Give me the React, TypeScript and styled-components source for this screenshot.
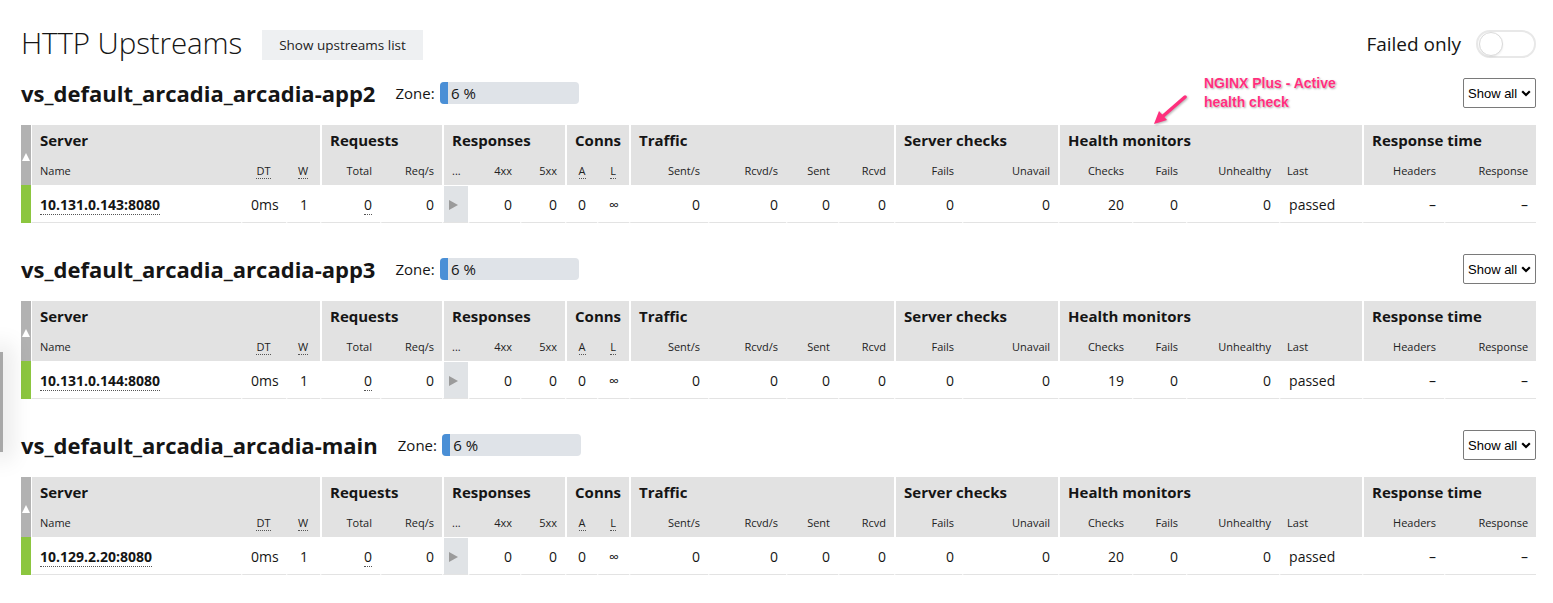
import React from 'react'
import styled, { createGlobalStyle, css } from 'styled-components'

const GlobalStyle = createGlobalStyle`
  body {
    margin: 0;
    background: #fff;
    font-family: 'Open Sans', sans-serif;
    color: #151515;
  }
`

type Align = 'left' | 'right' | 'center'

interface Column {
  label: string
  width: number
  align: Align
  dotted?: boolean
}

interface Group {
  title: string
  cols: Column[]
}

const GROUPS: Group[] = [
  {
    title: 'Server',
    cols: [
      { label: 'Name', width: 210, align: 'left' },
      { label: 'DT', width: 45, align: 'center', dotted: true },
      { label: 'W', width: 34, align: 'center', dotted: true },
    ],
  },
  {
    title: 'Requests',
    cols: [
      { label: 'Total', width: 60, align: 'right' },
      { label: 'Req/s', width: 62, align: 'right' },
    ],
  },
  {
    title: 'Responses',
    cols: [
      { label: '...', width: 26, align: 'left' },
      { label: '4xx', width: 52, align: 'right' },
      { label: '5xx', width: 45, align: 'right' },
    ],
  },
  {
    title: 'Conns',
    cols: [
      { label: 'A', width: 32, align: 'center', dotted: true },
      { label: 'L', width: 32, align: 'center', dotted: true },
    ],
  },
  {
    title: 'Traffic',
    cols: [
      { label: 'Sent/s', width: 79, align: 'right' },
      { label: 'Rcvd/s', width: 78, align: 'right' },
      { label: 'Sent', width: 52, align: 'right' },
      { label: 'Rcvd', width: 56, align: 'right' },
    ],
  },
  {
    title: 'Server checks',
    cols: [
      { label: 'Fails', width: 68, align: 'right' },
      { label: 'Unavail', width: 96, align: 'right' },
    ],
  },
  {
    title: 'Health monitors',
    cols: [
      { label: 'Checks', width: 74, align: 'right' },
      { label: 'Fails', width: 54, align: 'right' },
      { label: 'Unhealthy', width: 93, align: 'right' },
      { label: 'Last', width: 83, align: 'left' },
    ],
  },
  {
    title: 'Response time',
    cols: [
      { label: 'Headers', width: 82, align: 'right' },
      { label: 'Response', width: 92, align: 'right' },
    ],
  },
]

const UPSTREAMS = [
  { name: 'vs_default_arcadia_arcadia-app2', server: '10.131.0.143:8080', checks: 20, zone: 6 },
  { name: 'vs_default_arcadia_arcadia-app3', server: '10.131.0.144:8080', checks: 19, zone: 6 },
  { name: 'vs_default_arcadia_arcadia-main', server: '10.129.2.20:8080', checks: 20, zone: 6 },
]

const Page = styled.div`
  position: relative;
  padding: 30px 17px 20px 21px;
`

const TitleRow = styled.div`
  display: flex;
  align-items: center;
  height: 30px;
`

const Title = styled.h1`
  margin: 0;
  font-size: 29.5px;
  font-weight: 300;
  line-height: 30px;
  letter-spacing: -0.1px;
  position: relative;
  top: -2px;
`

const ListButton = styled.button`
  margin-left: 20px;
  height: 30px;
  padding: 0 17px;
  background: #eef0f2;
  border: none;
  font-family: 'Open Sans', sans-serif;
  font-size: 13.5px;
  color: #222;
`

const FailedFilter = styled.div`
  margin-left: auto;
  display: flex;
  align-items: center;
  gap: 15px;
  font-size: 19px;
  margin-top: -2px;
`

const ToggleTrack = styled.div`
  box-sizing: border-box;
  width: 60px;
  height: 28px;
  border: 2px solid #e8e8e8;
  border-radius: 14px;
  background: #fff;
  display: flex;
  align-items: center;
  padding: 0 1px;
`

const ToggleKnob = styled.div`
  width: 22px;
  height: 22px;
  border-radius: 50%;
  background: #fff;
  border: 1px solid #dadada;
  box-shadow: 0 1px 2px rgba(0, 0, 0, 0.08);
`

const Section = styled.section`
  margin-top: 18px;
  & + & {
    margin-top: 31px;
  }
`

const SectionHead = styled.div`
  display: flex;
  align-items: center;
  height: 30px;
  margin-bottom: 17px;
`

const UpstreamName = styled.h2`
  margin: 0;
  font-size: 22px;
  font-weight: 700;
  line-height: 30px;
`

const ZoneLabel = styled.span`
  margin-left: 20px;
  font-size: 15px;
`

const ZoneBar = styled.div`
  margin-left: 5px;
  width: 139px;
  height: 22px;
  border-radius: 4px;
  background: #dfe3e8;
  display: flex;
  align-items: center;
  overflow: hidden;
`

const ZoneFill = styled.div`
  align-self: stretch;
  background: #4a8fd6;
`

const ZoneText = styled.span`
  padding-left: 3px;
  font-size: 15px;
`

const SelectBox = styled.div`
  margin-left: auto;
  box-sizing: border-box;
  width: 73px;
  height: 30px;
  border: 1px solid #7a7a7a;
  border-radius: 2px;
  display: flex;
  align-items: center;
  justify-content: space-between;
  padding: 0 4px 0 4px;
  font-family: 'Liberation Sans', Arial, sans-serif;
  font-size: 13px;
  color: #000;
`

const Table = styled.table`
  border-collapse: separate;
  border-spacing: 0;
  table-layout: fixed;
  width: 1515px;
`

const HeadRow = styled.tr`
  height: 30px;
`

const BodyRow = styled.tr`
  height: 38px;
`

const cellAlign = css<{ $align: Align }>`
  text-align: ${({ $align }) => $align};
`

const SortCell = styled.th`
  background: #b2b2b2;
  padding: 0;
  vertical-align: middle;
  text-align: center;
`

const SortArrow = styled.span`
  display: inline-block;
  width: 0;
  height: 0;
  border-left: 4px solid transparent;
  border-right: 4px solid transparent;
  border-bottom: 8px solid #fff;
`

const GroupTh = styled.th<{ $gap: number }>`
  background: #e2e2e2;
  border-left: ${({ $gap }) => $gap}px solid #fff;
  padding: 0 8px;
  text-align: left;
  font-size: 15px;
  font-weight: 700;
  white-space: nowrap;
`

const SubTh = styled.th<{ $align: Align; $gap: number }>`
  ${cellAlign};
  background: #e2e2e2;
  border-left: ${({ $gap }) => $gap}px solid #fff;
  padding: 0 8px;
  font-size: 11px;
  font-weight: 400;
  white-space: nowrap;
  color: #222;
`

const Dotted = styled.span<{ $bold?: boolean }>`
  border-bottom: 1px dotted #555;
  font-weight: ${({ $bold }) => ($bold ? 700 : 'inherit')};
`

const StatusCell = styled.td`
  background: #8cc63f;
  padding: 0;
`

const Td = styled.td<{ $align: Align; $gap: number; $shaded?: boolean }>`
  ${cellAlign};
  border-left: ${({ $gap }) => $gap}px solid #fff;
  border-top: 1px solid #fff;
  border-bottom: 1px solid #e3e3e3;
  padding: 0 8px;
  font-size: 14px;
  white-space: nowrap;
  ${({ $shaded }) =>
    $shaded &&
    css`
      background: #e0e3e6;
      padding: 0 5px;
    `}
`

const PlayArrow = styled.span`
  display: inline-block;
  width: 0;
  height: 0;
  border-top: 5px solid transparent;
  border-bottom: 5px solid transparent;
  border-left: 9px solid #9b9b9b;
`

const Note = styled.div`
  position: absolute;
  left: 1204px;
  top: 74px;
  font-family: 'Liberation Sans', Arial, sans-serif;
  font-size: 14px;
  font-weight: 700;
  line-height: 19px;
  color: #ff2f7d;
  text-shadow: 0 0 1px #fff, 1px 1px 2px rgba(0, 0, 0, 0.35);
`

const NoteArrow = styled.svg`
  position: absolute;
  left: 1148px;
  top: 92px;
  filter: drop-shadow(1px 1px 1px rgba(0, 0, 0, 0.3));
`

const SidePanelEdge = styled.div`
  position: fixed;
  left: 0;
  top: 352px;
  width: 3px;
  height: 100px;
  background: #a8a8a8;
  box-shadow: 0 0 22px 8px rgba(0, 0, 0, 0.1);
`

function rowValues(server: string, checks: number): React.ReactNode[] {
  return [
    <Dotted $bold>{server}</Dotted>,
    '0ms',
    '1',
    <Dotted>0</Dotted>,
    '0',
    <PlayArrow />,
    '0',
    '0',
    '0',
    '∞',
    '0',
    '0',
    '0',
    '0',
    '0',
    '0',
    String(checks),
    '0',
    '0',
    'passed',
    '–',
    '–',
  ]
}

const ChevronDown = () => (
  <svg width="10" height="7" viewBox="0 0 10 7">
    <path d="M1.2 1.3 L5 5 L8.8 1.3" fill="none" stroke="#000" strokeWidth="2.2" />
  </svg>
)

const UpstreamTable: React.FC<{ server: string; checks: number }> = ({ server, checks }) => {
  const cols = GROUPS.flatMap((g, gi) =>
    g.cols.map((c, ci) => ({ ...c, gap: ci === 0 ? (gi === 0 ? 1 : 2) : 0 }))
  )
  const values = rowValues(server, checks)

  return (
    <Table>
      <colgroup>
        <col style={{ width: 10 }} />
        {cols.map((c, i) => (
          <col key={i} style={{ width: c.width }} />
        ))}
      </colgroup>
      <thead>
        <HeadRow>
          <SortCell rowSpan={2}>
            <SortArrow />
          </SortCell>
          {GROUPS.map((g, gi) => (
            <GroupTh key={g.title} colSpan={g.cols.length} $gap={gi === 0 ? 1 : 2}>
              {g.title}
            </GroupTh>
          ))}
        </HeadRow>
        <HeadRow>
          {cols.map((c, i) => (
            <SubTh key={i} $align={c.align} $gap={c.gap}>
              {c.dotted ? <Dotted>{c.label}</Dotted> : c.label}
            </SubTh>
          ))}
        </HeadRow>
      </thead>
      <tbody>
        <BodyRow>
          <StatusCell />
          {cols.map((c, i) => (
            <Td key={i} $align={c.align} $gap={i === 0 ? 1 : 2} $shaded={c.label === '...'}>
              {values[i]}
            </Td>
          ))}
        </BodyRow>
      </tbody>
    </Table>
  )
}

export default function App() {
  return (
    <>
      <GlobalStyle />
      <Page>
        <TitleRow>
          <Title>HTTP Upstreams</Title>
          <ListButton>Show upstreams list</ListButton>
          <FailedFilter>
            Failed only
            <ToggleTrack>
              <ToggleKnob />
            </ToggleTrack>
          </FailedFilter>
        </TitleRow>

        {UPSTREAMS.map(u => (
          <Section key={u.name}>
            <SectionHead>
              <UpstreamName>{u.name}</UpstreamName>
              <ZoneLabel>Zone:</ZoneLabel>
              <ZoneBar>
                <ZoneFill style={{ width: `${u.zone}%` }} />
                <ZoneText>{u.zone} %</ZoneText>
              </ZoneBar>
              <SelectBox>
                Show all
                <ChevronDown />
              </SelectBox>
            </SectionHead>
            <UpstreamTable server={u.server} checks={u.checks} />
          </Section>
        ))}

        <Note>
          NGINX Plus - Active
          <br />
          health check
        </Note>
        <NoteArrow width="44" height="38" viewBox="0 0 44 38">
          <path d="M37 5 L14 25" stroke="#ff2f7d" strokeWidth="3.5" strokeLinecap="round" />
          <path d="M6 32 L11 19 L19 28 Z" fill="#ff2f7d" />
        </NoteArrow>
      </Page>
      <SidePanelEdge />
    </>
  )
}
